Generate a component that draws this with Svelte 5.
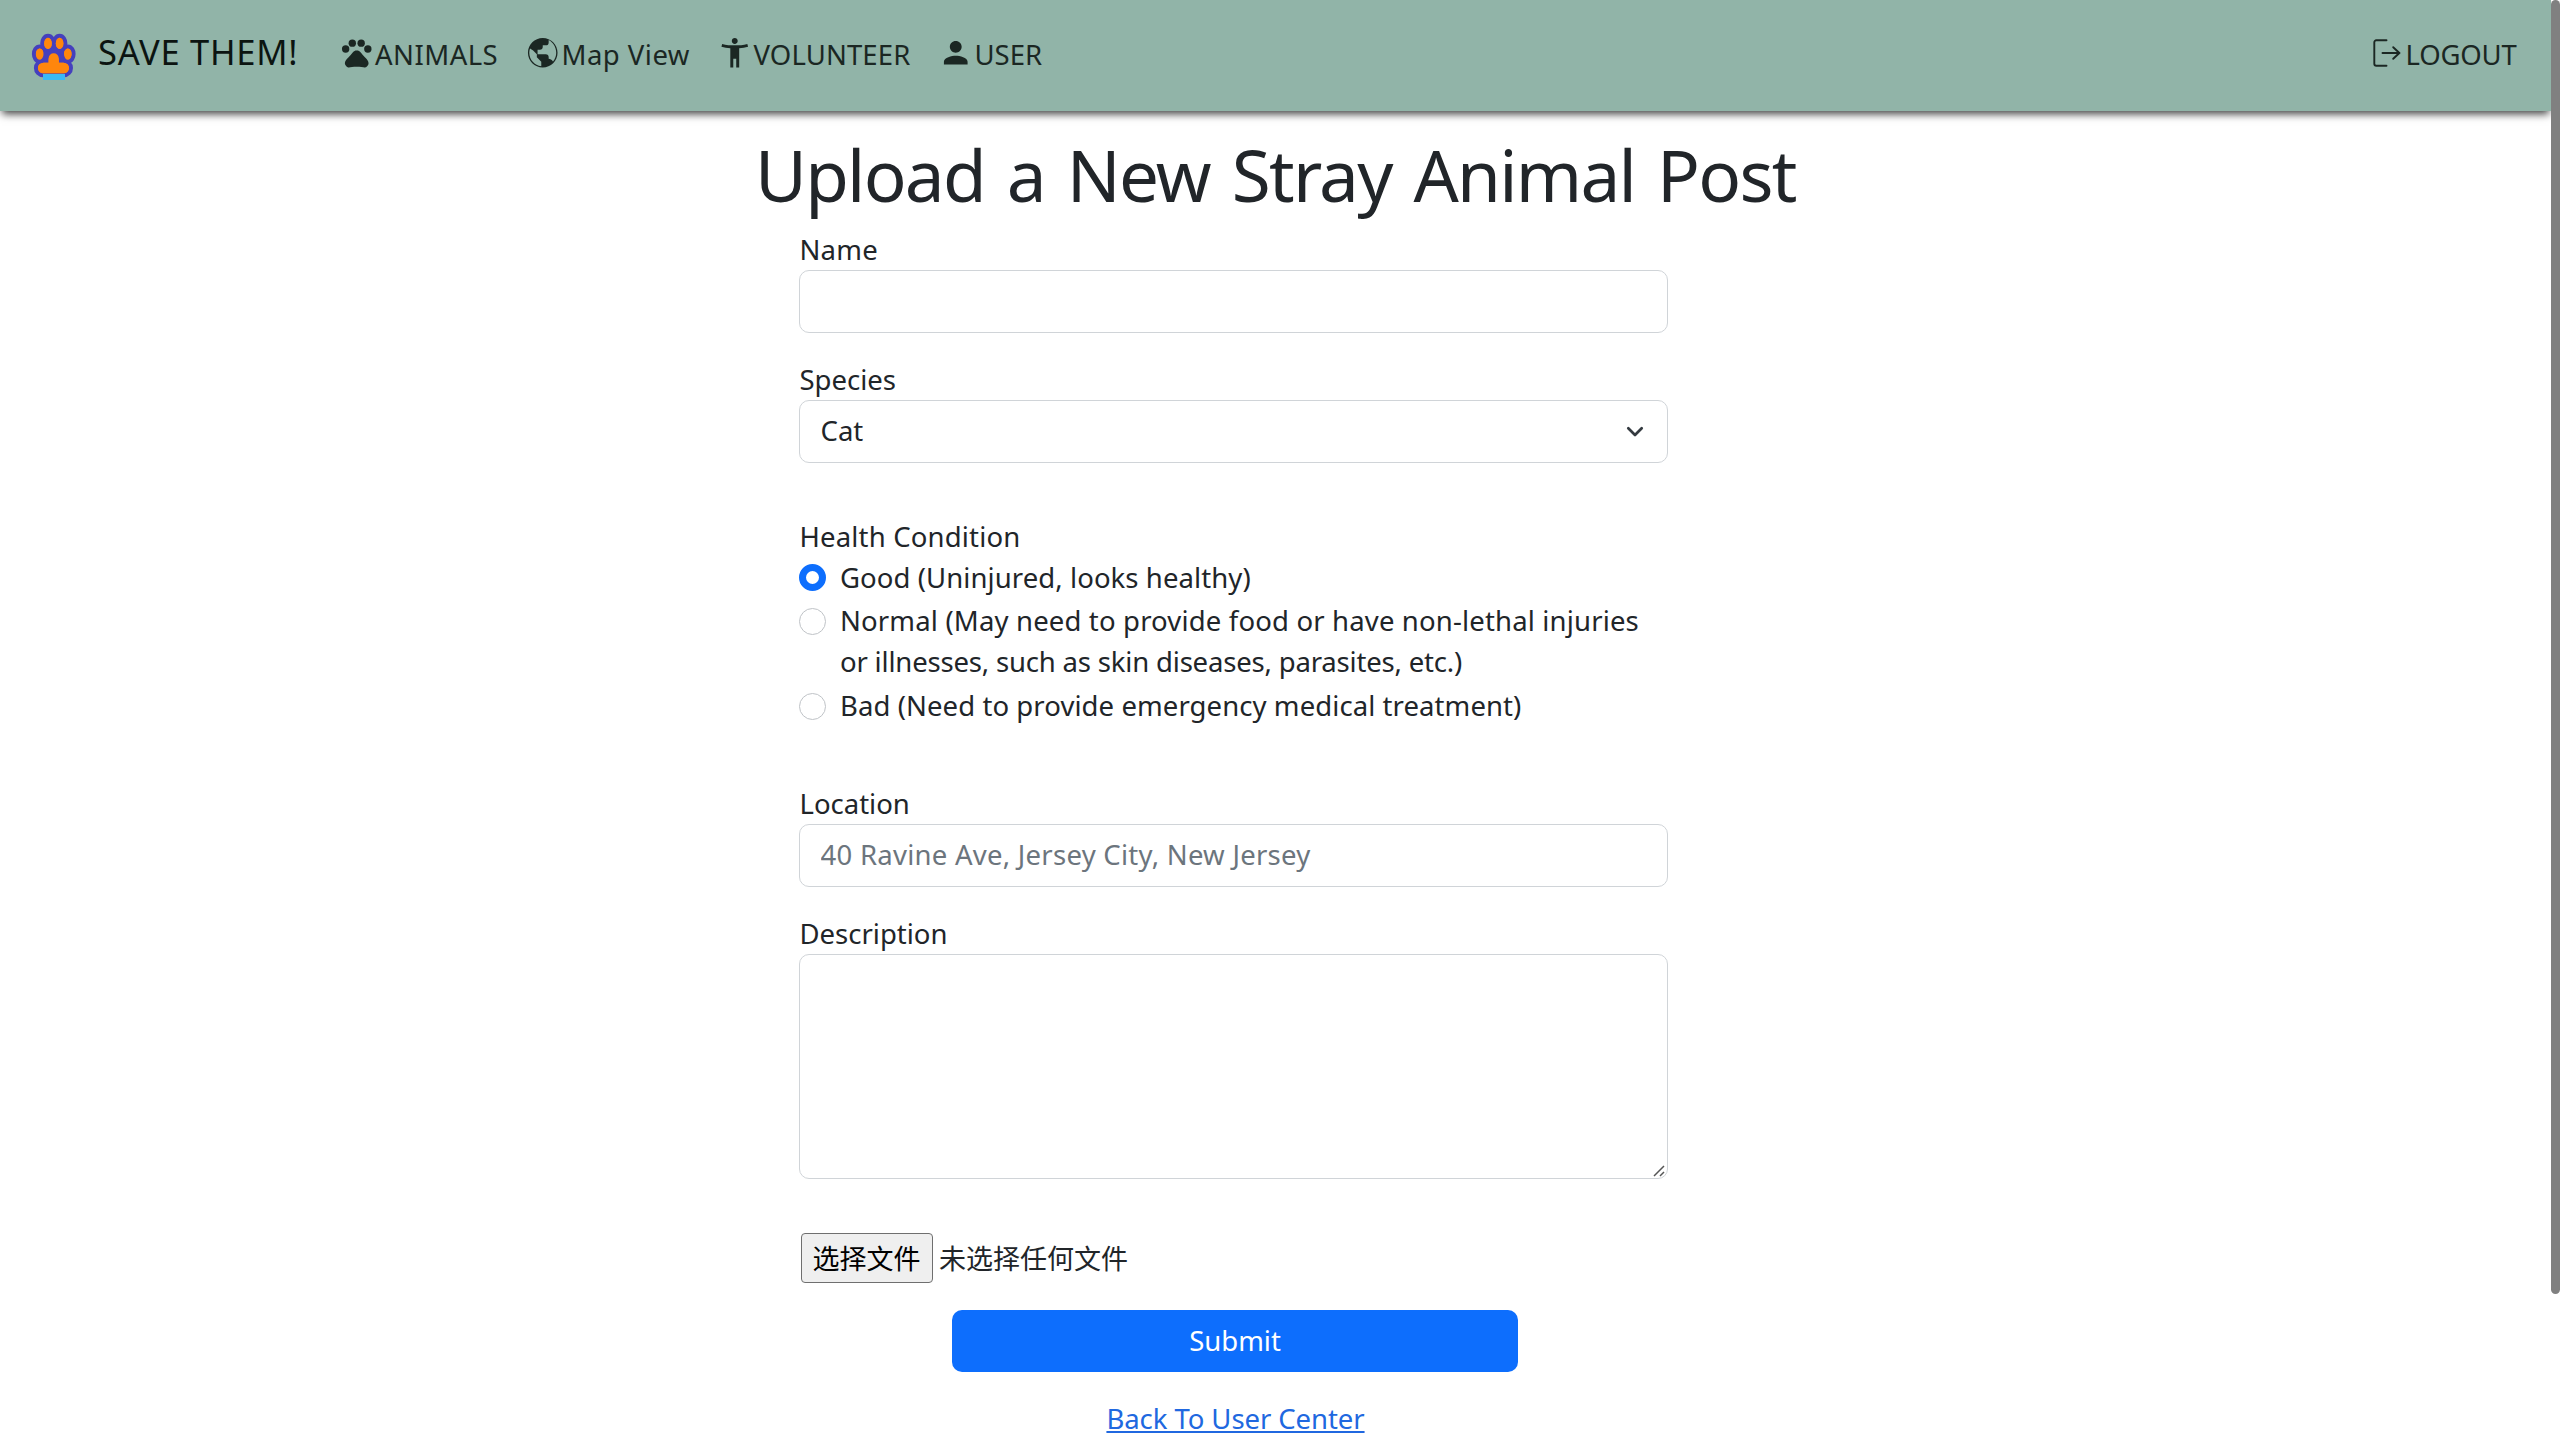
<script>
  let name = $state('');
  let species = $state('Cat');
  let health = $state('good');
  let location = $state('');
  let description = $state('');
</script>

<div class="page">
  <nav class="navbar">
    <a class="brand" href="#home">
      <svg class="logo" width="46" height="48" viewBox="31 33 46 48">
        <g fill="#ff860d" stroke="#4540bd" stroke-width="8" stroke-linejoin="round" paint-order="stroke">
          <path d="M48.6 62.7V58.4a5.1 5.1 0 0 1 10.2 0v4.3h4.9a5.3 5.3 0 0 1 0 10.6h-20.5a5.3 5.3 0 0 1 0-10.6z" />
          <ellipse cx="39.7" cy="54" rx="3.8" ry="5.6" />
          <ellipse cx="67.8" cy="54" rx="3.8" ry="5.6" />
          <ellipse cx="48" cy="43.4" rx="3.8" ry="5.6" />
          <ellipse cx="59.6" cy="43.4" rx="3.8" ry="5.6" />
        </g>
        <path fill="#4540bd" d="M44 50h19l3 10-6 2-3-7h-7l-3 7-6-2z" />
        <g fill="#ff860d">
          <path d="M48.6 62.7V58.4a5.1 5.1 0 0 1 10.2 0v4.3h4.9a5.3 5.3 0 0 1 0 10.6h-20.5a5.3 5.3 0 0 1 0-10.6z" />
          <ellipse cx="39.7" cy="54" rx="3.8" ry="5.6" />
          <ellipse cx="67.8" cy="54" rx="3.8" ry="5.6" />
          <ellipse cx="48" cy="43.4" rx="3.8" ry="5.6" />
          <ellipse cx="59.6" cy="43.4" rx="3.8" ry="5.6" />
        </g>
        <rect x="43" y="74" width="22" height="6" fill="#3cbaf6" />
      </svg>
      <span>SAVE THEM!</span>
    </a>

    <div class="links">
      <a class="link wide" href="#animals">
        <svg class="icon" viewBox="0 0 24 24">
          <circle cx="4.5" cy="9.5" r="2.5" /><circle cx="9" cy="5.5" r="2.5" />
          <circle cx="15" cy="5.5" r="2.5" /><circle cx="19.5" cy="9.5" r="2.5" />
          <path d="M17.34 14.86c-.87-1.02-1.6-1.89-2.48-2.91-.46-.54-1.05-1.08-1.75-1.32-.11-.04-.22-.07-.33-.09-.25-.04-.52-.04-.78-.04s-.53 0-.79.05c-.11.02-.22.05-.33.09-.7.24-1.28.78-1.75 1.32-.87 1.02-1.6 1.89-2.48 2.91-1.31 1.31-2.92 2.76-2.62 4.79.29 1.02 1.02 2.03 2.33 2.32.73.15 3.06-.44 5.54-.44h.18c2.48 0 4.81.58 5.54.44 1.31-.29 2.04-1.31 2.33-2.32.31-2.04-1.3-3.49-2.61-4.8z" />
        </svg>
        <span>ANIMALS</span>
      </a>
      <a class="link wide" href="#map">
        <svg class="icon" viewBox="0 0 24 24">
          <path fill-rule="evenodd" d="M12 2C6.5 2 2 6.5 2 12s4.5 10 10 10 10-4.5 10-10S17.5 2 12 2zM2.9 12c0-.9.2-1.9.5-2.8L5.5 10.5l2.5 2.5v2l2 2 1 1v3.05C6.5 20.6 2.9 16.8 2.9 12zM18.9 17.9C18.2 16.6 17 16 16 16v-1a2 2 0 0 0-2-2H8.5v-3H10a2 2 0 0 0 2-2V7h2a2 2 0 0 0 2-2V3.4C18.6 4.7 21.1 8 21.1 12a9 9 0 0 1-2.2 5.9z" />
        </svg>
        <span>Map View</span>
      </a>
      <a class="link" href="#volunteer">
        <svg class="icon" viewBox="0 0 24 24">
          <path d="M20.5 6c-2.61.7-5.67 1-8.5 1s-5.89-.3-8.5-1L3 8c1.86.5 4 .83 6 1v13h2v-6h2v6h2V9c2-.17 4.14-.5 6-1l-.5-2zM12 6c1.1 0 2-.9 2-2s-.9-2-2-2-2 .9-2 2 .9 2 2 2z" />
        </svg>
        <span class="volunteer">VOLUNTEER</span>
      </a>
      <a class="link" href="#user">
        <svg class="icon" viewBox="0 0 24 24">
          <path d="M12 12c2.21 0 4-1.79 4-4s-1.79-4-4-4-4 1.79-4 4 1.79 4 4 4zm0 2c-2.67 0-8 1.34-8 4v2h16v-2c0-2.66-5.33-4-8-4z" />
        </svg>
        <span>USER</span>
      </a>
    </div>

    <a class="link logout" href="#logout">
      <svg class="exit" width="28" height="28" viewBox="0 0 28 28">
        <path d="M13.5 1.3H3.3a2 2 0 0 0-2 2v21.4a2 2 0 0 0 2 2h10.2M9.5 14h17M20.2 8.2l6.2 5.8-6.2 5.8" />
      </svg>
      <span>LOGOUT</span>
    </a>
  </nav>

  <main>
    <h1>Upload a New Stray Animal Post</h1>
    <form onsubmit={(e) => e.preventDefault()}>
      <label class="label name" for="name">Name</label>
      <input class="control" id="name" bind:value={name} />

      <label class="label gap" for="species">Species</label>
      <div class="select-wrap">
        <select class="control" id="species" bind:value={species}>
          <option>Cat</option>
          <option>Dog</option>
        </select>
        <svg class="chevron" width="20" height="14" viewBox="0 0 20 14"><path d="M3.3 3.3 10 10l6.7-6.7" /></svg>
      </div>

      <div class="label health">Health Condition</div>
      <label class="check good">
        <input type="radio" value="good" bind:group={health} />
        <span>Good (Uninjured, looks healthy)</span>
      </label>
      <label class="check normal">
        <input type="radio" value="normal" bind:group={health} />
        <span>Normal (May need to provide food or have non-lethal injuries<br /><span class="second">or illnesses, such as skin diseases, parasites, etc.)</span></span>
      </label>
      <label class="check">
        <input type="radio" value="bad" bind:group={health} />
        <span>Bad (Need to provide emergency medical treatment)</span>
      </label>

      <label class="label location" for="location">Location</label>
      <input class="control" id="location" placeholder="40 Ravine Ave, Jersey City, New Jersey" bind:value={location} />

      <label class="label gap" for="description">Description</label>
      <div class="area-wrap">
        <textarea class="control" id="description" bind:value={description}></textarea>
        <svg class="grip" width="12" height="12" viewBox="0 0 12 12"><path d="M1 11 11 1M7 11l4-4" /></svg>
      </div>

      <div class="file">
        <button type="button">选择文件</button>
        <span>未选择任何文件</span>
      </div>

      <button class="submit" type="submit">Submit</button>
      <a class="back" href="#center">Back To User Center</a>
    </form>
  </main>

  <div class="scroll-thumb"></div>
</div>

<style>
  :global(body) {
    margin: 0;
    background: #fff;
    overflow: hidden;
  }
  .page {
    width: 2551px;
    height: 1440px;
    overflow: hidden;
    font: 27.5px/41px "Noto Sans", "Noto Sans CJK SC", sans-serif;
    color: #212529;
  }
  .page * {
    box-sizing: border-box;
  }
  .navbar {
    display: flex;
    height: 111px;
    padding-left: 31px;
    background: #91b4a8;
    box-shadow: 0 5px 8px -2px rgba(0, 0, 0, 0.75);
  }
  .navbar a {
    color: #1b2723;
    text-decoration: none;
    white-space: nowrap;
  }
  .navbar .brand {
    display: flex;
    width: 307.5px;
    color: #0c1411;
    font-size: 34.5px;
    letter-spacing: 0.72px;
  }
  .brand span {
    margin: 31px 0 0 21px;
  }
  .logo {
    margin-top: 33px;
  }
  .links {
    display: grid;
    grid-template-columns: 186.5px 192px 221px 160px;
  }
  .link {
    display: flex;
    gap: 1px;
  }
  .link span {
    margin-top: 34px;
  }
  .wide {
    letter-spacing: 0.48px;
  }
  .volunteer {
    letter-spacing: 0.12px;
  }
  .icon {
    width: 35.5px;
    height: 35.5px;
    margin-top: 35.3px;
    fill: currentColor;
  }
  .logout {
    margin: 0 34.5px 0 auto;
    gap: 4px;
    letter-spacing: -0.2px;
  }
  .exit {
    margin-top: 39px;
    fill: none;
    stroke: currentColor;
    stroke-width: 1.9;
    stroke-linecap: round;
    stroke-linejoin: round;
  }
  main {
    width: 1046px;
    margin: 0 auto 0 755px;
    padding-top: 21px;
  }
  h1 {
    margin: 0;
    height: 84px;
    font-size: 71px;
    font-weight: 400;
    line-height: 85px;
    letter-spacing: -1.75px;
    word-spacing: 5.2px;
    white-space: nowrap;
  }
  form {
    display: flex;
    flex-direction: column;
    width: 869px;
    margin: 13px 0 0 44px;
  }
  .label {
    display: block;
    height: 41px;
    padding-left: 0.5px;
  }
  .name {
    letter-spacing: 0.2px;
  }
  .gap {
    margin-top: 26px;
  }
  .health {
    margin-top: 53px;
    letter-spacing: 0.17px;
  }
  .location {
    margin-top: 57px;
  }
  .control {
    display: block;
    width: 869px;
    height: 63px;
    margin: 0;
    padding: 0 20.5px 2px;
    border: 1px solid #d0d4d8;
    border-radius: 10px;
    outline: 0;
    background: #fff;
    color: #212529;
    font: inherit;
    letter-spacing: 0;
    appearance: none;
    resize: none;
  }
  #location {
    letter-spacing: 0.26px;
  }
  #location::placeholder {
    color: #6c757d;
    opacity: 1;
  }
  textarea.control {
    height: 225px;
  }
  .select-wrap,
  .area-wrap {
    position: relative;
  }
  .chevron {
    position: absolute;
    right: 23px;
    top: 25px;
    fill: none;
    stroke: #343a40;
    stroke-width: 2.7;
    stroke-linecap: round;
    stroke-linejoin: round;
    pointer-events: none;
  }
  .grip {
    position: absolute;
    right: 3px;
    bottom: 2px;
    fill: none;
    stroke: #555;
    stroke-width: 1.5;
    pointer-events: none;
  }
  .check {
    display: flex;
    gap: 14px;
    letter-spacing: 0.08px;
    white-space: nowrap;
  }
  .good {
    margin-bottom: 2px;
  }
  .normal {
    margin-bottom: 3px;
    letter-spacing: 0.16px;
  }
  .second {
    letter-spacing: -0.18px;
  }
  .check input {
    flex: none;
    width: 27px;
    height: 27px;
    margin: 8px 0 0;
    border: 1px solid #bfc3c7;
    border-radius: 50%;
    background: #fff;
    appearance: none;
  }
  .good input {
    margin-top: 7px;
  }
  .check input:checked {
    border: 7px solid #0d6efd;
  }
  .file {
    display: flex;
    align-items: center;
    gap: 6px;
    height: 50px;
    margin: 54px 0 0 2px;
    font: 27px/50px "Noto Sans CJK SC", sans-serif;
  }
  .file button {
    width: 132px;
    height: 50px;
    padding: 0 1px 0 0;
    border: 1px solid #6f6f6f;
    border-radius: 4px;
    background: #efefef;
    color: #000;
    font: inherit;
    line-height: 46px;
  }
  .submit {
    width: 566px;
    height: 62px;
    margin: 27px 0 0 153px;
    padding: 0 0 1px;
    border: 0;
    border-radius: 10px;
    background: #0d6efd;
    color: #fff;
    font: inherit;
  }
  .back {
    align-self: center;
    margin: 25.5px 0 0 4px;
    color: #2068e0;
    letter-spacing: -0.07px;
    text-decoration: underline;
    text-decoration-thickness: 2px;
    text-underline-offset: 2px;
    text-decoration-skip-ink: none;
  }
  .scroll-thumb {
    position: fixed;
    top: 0;
    right: 0;
    width: 9px;
    height: 1294px;
    border-radius: 5px;
    background: #808080;
  }
</style>
